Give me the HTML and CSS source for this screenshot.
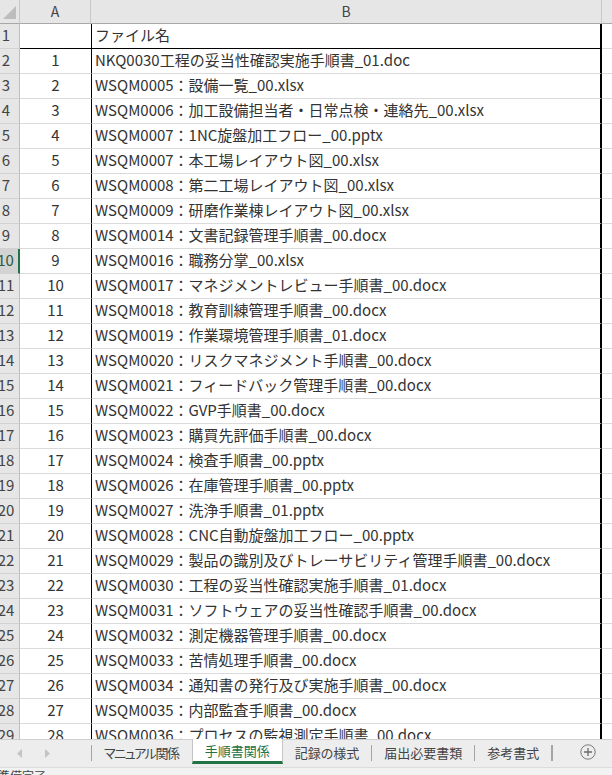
FILE: index.html
```html
<!DOCTYPE html>
<html lang="ja">
<head>
<meta charset="utf-8">
<title>手順書関係</title>
<link rel="stylesheet" href="styles.css">
</head>
<body>
<div class="sheet">
  <div class="grid">
    <div class="corner"><svg width="19" height="23" viewBox="0 0 19 23"><polygon points="16,6 16,19 3,19" fill="#bdbdbd"/></svg></div>
    <div class="colhead ch-a">A</div>
    <div class="colhead ch-b">B</div>
    <div class="colhead ch-c"></div>

    <div class="rh">1</div><div class="ca r1"></div><div class="cb r1">ファイル名</div><div class="cc"></div>
    <div class="rh">2</div><div class="ca">1</div><div class="cb">NKQ0030工程の妥当性確認実施手順書_01.doc</div><div class="cc"></div>
    <div class="rh">3</div><div class="ca">2</div><div class="cb">WSQM0005：設備一覧_00.xlsx</div><div class="cc"></div>
    <div class="rh">4</div><div class="ca">3</div><div class="cb">WSQM0006：加工設備担当者・日常点検・連絡先_00.xlsx</div><div class="cc"></div>
    <div class="rh">5</div><div class="ca">4</div><div class="cb">WSQM0007：1NC旋盤加工フロー_00.pptx</div><div class="cc"></div>
    <div class="rh">6</div><div class="ca">5</div><div class="cb">WSQM0007：本工場レイアウト図_00.xlsx</div><div class="cc"></div>
    <div class="rh">7</div><div class="ca">6</div><div class="cb">WSQM0008：第二工場レイアウト図_00.xlsx</div><div class="cc"></div>
    <div class="rh">8</div><div class="ca">7</div><div class="cb">WSQM0009：研磨作業棟レイアウト図_00.xlsx</div><div class="cc"></div>
    <div class="rh">9</div><div class="ca">8</div><div class="cb">WSQM0014：文書記録管理手順書_00.docx</div><div class="cc"></div>
    <div class="rh sel">10</div><div class="ca">9</div><div class="cb">WSQM0016：職務分掌_00.xlsx</div><div class="cc"></div>
    <div class="rh">11</div><div class="ca">10</div><div class="cb">WSQM0017：マネジメントレビュー手順書_00.docx</div><div class="cc"></div>
    <div class="rh">12</div><div class="ca">11</div><div class="cb">WSQM0018：教育訓練管理手順書_00.docx</div><div class="cc"></div>
    <div class="rh">13</div><div class="ca">12</div><div class="cb">WSQM0019：作業環境管理手順書_01.docx</div><div class="cc"></div>
    <div class="rh">14</div><div class="ca">13</div><div class="cb">WSQM0020：リスクマネジメント手順書_00.docx</div><div class="cc"></div>
    <div class="rh">15</div><div class="ca">14</div><div class="cb">WSQM0021：フィードバック管理手順書_00.docx</div><div class="cc"></div>
    <div class="rh">16</div><div class="ca">15</div><div class="cb">WSQM0022：GVP手順書_00.docx</div><div class="cc"></div>
    <div class="rh">17</div><div class="ca">16</div><div class="cb">WSQM0023：購買先評価手順書_00.docx</div><div class="cc"></div>
    <div class="rh">18</div><div class="ca">17</div><div class="cb">WSQM0024：検査手順書_00.pptx</div><div class="cc"></div>
    <div class="rh">19</div><div class="ca">18</div><div class="cb">WSQM0026：在庫管理手順書_00.pptx</div><div class="cc"></div>
    <div class="rh">20</div><div class="ca">19</div><div class="cb">WSQM0027：洗浄手順書_01.pptx</div><div class="cc"></div>
    <div class="rh">21</div><div class="ca">20</div><div class="cb">WSQM0028：CNC自動旋盤加工フロー_00.pptx</div><div class="cc"></div>
    <div class="rh">22</div><div class="ca">21</div><div class="cb">WSQM0029：製品の識別及びトレーサビリティ管理手順書_00.docx</div><div class="cc"></div>
    <div class="rh">23</div><div class="ca">22</div><div class="cb">WSQM0030：工程の妥当性確認実施手順書_01.docx</div><div class="cc"></div>
    <div class="rh">24</div><div class="ca">23</div><div class="cb">WSQM0031：ソフトウェアの妥当性確認手順書_00.docx</div><div class="cc"></div>
    <div class="rh">25</div><div class="ca">24</div><div class="cb">WSQM0032：測定機器管理手順書_00.docx</div><div class="cc"></div>
    <div class="rh">26</div><div class="ca">25</div><div class="cb">WSQM0033：苦情処理手順書_00.docx</div><div class="cc"></div>
    <div class="rh">27</div><div class="ca">26</div><div class="cb">WSQM0034：通知書の発行及び実施手順書_00.docx</div><div class="cc"></div>
    <div class="rh">28</div><div class="ca">27</div><div class="cb">WSQM0035：内部監査手順書_00.docx</div><div class="cc"></div>
    <div class="rh last">29</div><div class="ca last">28</div><div class="cb last">WSQM0036：プロセスの監視測定手順書_00.docx</div><div class="cc last"></div>
  </div>
</div>

<div class="tabbar">
  <div class="nav">
    <svg class="arrow" width="6" height="9" viewBox="0 0 6 9"><polygon points="5,0 5,9 0,4.5" fill="#c4c4c4"/></svg>
    <svg class="arrow" width="6" height="9" viewBox="0 0 6 9"><polygon points="0,0 0,9 5,4.5" fill="#c4c4c4"/></svg>
  </div>
  <div class="tab narrow">マニュアル関係</div>
  <div class="tab active">手順書関係</div>
  <div class="tab sep">記録の様式</div>
  <div class="tab sep">届出必要書類</div>
  <div class="tab sep">参考書式</div>
  <div class="add">
    <svg width="16" height="16" viewBox="0 0 16 16"><circle cx="8" cy="8" r="7.2" fill="none" stroke="#7a7a7a" stroke-width="1"/><path d="M8 4v8M4 8h8" stroke="#6a6a6a" stroke-width="1.3"/></svg>
  </div>
</div>

<div class="status">準備完了</div>
</body>
</html>
```

FILE: styles.css
```css
* { box-sizing: border-box; }

html, body {
  margin: 0;
  padding: 0;
  background: #ffffff;
  width: 612px;
  height: 775px;
  overflow: hidden;
  font-family: "Noto Sans CJK JP", "Noto Sans", sans-serif;
}

.sheet {
  height: 739px;
  overflow: hidden;
}

.grid {
  display: grid;
  grid-template-columns: 20px 71px 511px 10px;
  grid-auto-rows: 25px;
  grid-template-rows: 24px;
}

.corner {
  background: #e6e6e6;
  border-right: 1px solid #c8c8c8;
  border-bottom: 1px solid #a8a8a8;
}

.corner svg { display: block; }

.colhead {
  background: #e6e6e6;
  border-bottom: 1px solid #a8a8a8;
  border-right: 1px solid #c8c8c8;
  color: #444444;
  font-size: 14px;
  display: flex;
  align-items: center;
  justify-content: center;
  padding-bottom: 1px;
}

.ch-c { border-right: none; }

.rh {
  background: #e6e6e6;
  border-right: 1px solid #bdbdbd;
  border-bottom: 1px solid #d2d2d2;
  color: #444444;
  font-size: 15px;
  display: flex;
  align-items: center;
  justify-content: center;
  padding: 0 7px 3px 0;
  white-space: nowrap;
}

.rh.sel {
  background: #d3d3d3;
  border-right: 2px solid #217346;
  color: #2e5a3f;
}

.ca, .cb, .cc {
  border-bottom: 1px solid #dadada;
  color: #333333;
  font-size: 15px;
  display: flex;
  align-items: center;
  white-space: nowrap;
  padding-bottom: 3px;
}

.ca {
  justify-content: center;
}

.cb {
  border-left: 1px solid #000000;
  border-right: 2px solid #000000;
  padding-left: 3px;
  overflow: hidden;
}

.ca.r1, .cb.r1 {
  border-bottom: 1px solid #000000;
}

.last {
  height: 15px;
  align-self: start;
  align-items: flex-start;
  overflow: hidden;
  line-height: 15px;
  padding-top: 3px;
  padding-bottom: 0;
  border-bottom: none;
}

.tabbar {
  height: 28px;
  background: #ededed;
  border-top: 1px solid #cfcfcf;
  display: flex;
  align-items: stretch;
  font-size: 13px;
  color: #444444;
  font-feature-settings: "palt";
}

.nav {
  width: 92px;
  display: flex;
  align-items: center;
  padding-left: 17px;
  gap: 22px;
  position: relative;
}

.nav::after,
.tab.sep::after,
.add::before {
  content: "";
  position: absolute;
  right: 0;
  top: 5px;
  height: 16px;
  border-right: 1px solid #a5a5a5;
}

.tab {
  position: relative;
  display: flex;
  align-items: center;
  padding: 0 12px 3px 12px;
  white-space: nowrap;
}

.tab.narrow {
  letter-spacing: -1.4px;
  padding-right: 13px;
}

.tab.sep { padding-right: 13px; }

.tab.active {
  background: #ffffff;
  color: #217346;
  border-left: 1px solid #c4c4c4;
  border-right: 1px solid #c4c4c4;
  border-bottom: 3px solid #217346;
  margin-bottom: 3px;
  padding-bottom: 0;
  margin-top: -1px;
}

.add {
  position: relative;
  flex: 1;
  display: flex;
  align-items: center;
  justify-content: center;
  padding-left: 12px;
  padding-bottom: 3px;
}

.add::before {
  left: 0;
  right: auto;
}

.add svg { display: block; }

.status {
  height: 20px;
  background: #f2f2f2;
  border-top: 1px solid #dcdcdc;
  font-size: 12px;
  line-height: 14px;
  color: #444444;
  padding: 1px 0 0 0;
  margin-left: -2px;
}
```
